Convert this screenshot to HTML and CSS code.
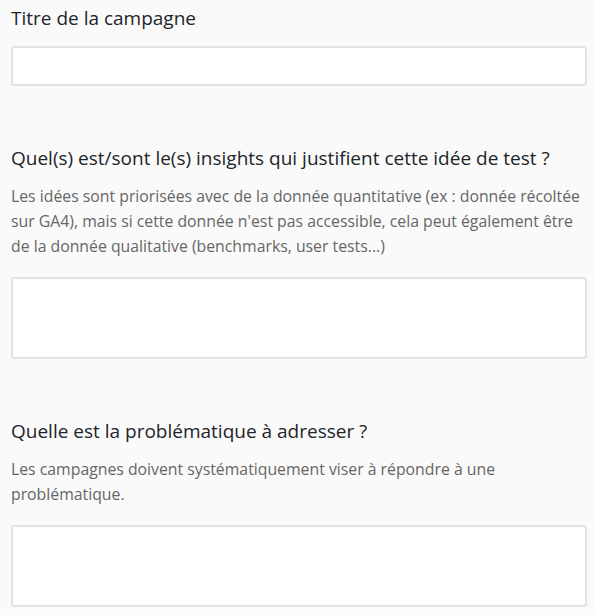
FILE: index.html
```html
<!DOCTYPE html>
<html lang="fr">
<head>
<meta charset="utf-8">
<link rel="stylesheet" href="styles.css">
</head>
<body>
<form class="form">
  <div class="field">
    <label class="label">Titre de la campagne</label>
    <input class="input" type="text">
  </div>
  <div class="field">
    <label class="label">Quel(s) est/sont le(s) insights qui justifient cette idée de test ?</label>
    <p class="help">Les idées sont priorisées avec de la donnée quantitative (ex : donnée récoltée sur GA4), mais si cette donnée n'est pas accessible, cela peut également être de la donnée qualitative (benchmarks, user tests...)</p>
    <textarea class="textarea"></textarea>
  </div>
  <div class="field">
    <label class="label">Quelle est la problématique à adresser ?</label>
    <p class="help">Les campagnes doivent systématiquement viser à répondre à une problématique.</p>
    <textarea class="textarea"></textarea>
  </div>
</form>
</body>
</html>
```

FILE: styles.css
```css
html, body {
  margin: 0;
  padding: 0;
  background: #fafafa;
}
body {
  font-family: "Open Sans", "Noto Sans", sans-serif;
  color: #212529;
}
.form {
  display: flex;
  flex-direction: column;
  gap: 58px;
  padding: 4px 8px 0 11px;
}
.field {
  display: flex;
  flex-direction: column;
}
.label {
  font-size: 19px;
  line-height: 28px;
  margin-bottom: 14px;
}
.label:has(+ .help) {
  margin-bottom: 12px;
}
.help {
  margin: 0 0 18px;
  font-size: 15.8px;
  line-height: 25px;
  color: #666;
}
.input, .textarea {
  box-sizing: border-box;
  width: 100%;
  background: #fff;
  border: 2px solid #e3e3e3;
  border-radius: 3px;
  margin: 0;
  padding: 6px 10px;
  font: inherit;
  resize: none;
}
.input {
  height: 40px;
}
.textarea {
  height: 82px;
}
```
